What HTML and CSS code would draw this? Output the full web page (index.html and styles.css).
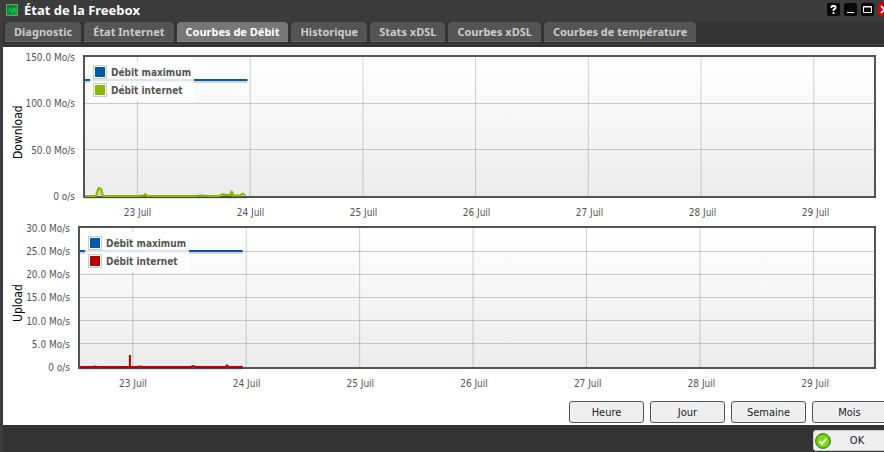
FILE: index.html
```
<!DOCTYPE html>
<html lang="fr">
<head>
<meta charset="utf-8">
<title>État de la Freebox</title>
<link rel="stylesheet" href="styles.css">
</head>
<body>
<div class="window">
  <header class="titlebar">
    <svg class="app-icon" viewBox="0 0 12 12" aria-hidden="true">
      <defs><linearGradient id="app" x1="0" y1="0" x2="1" y2="1"><stop offset="0" stop-color="#077428"/><stop offset="1" stop-color="#10a845"/></linearGradient></defs>
      <rect x=".5" y=".5" width="11" height="11" fill="url(#app)" stroke="#6c9a78"/>
      <path d="M2 7h1l1.500-3 1.500 5 2-5 .5 4 1.500-4" fill="none" stroke="#12d052" stroke-width=".8"/>
    </svg>
    <h1>État de la Freebox</h1>
    <div class="tools">
      <button class="tool" type="button" aria-label="Aide"><svg viewBox="0 0 13 13"><path d="M4.500 5V4q0-1 1-1h2q1 0 1 1v1.200L6.500 7v1M6.500 9v2" fill="none" stroke="#fff" stroke-width="1.8"/></svg></button>
      <button class="tool" type="button" aria-label="Réduire"><svg viewBox="0 0 13 13"><path d="M3 9.500h7" stroke="#fff"/></svg></button>
      <button class="tool" type="button" aria-label="Agrandir"><svg viewBox="0 0 13 13"><path d="M2.500 3.500h8v6h-8zM2 4h9" fill="none" stroke="#fff"/></svg></button>
      <button class="tool tool-close" type="button" aria-label="Fermer"><svg viewBox="0 0 13 13"><path d="M3 3l7 7M10 3l-7 7" stroke="#fff" stroke-width="1.8"/></svg></button>
    </div>
  </header>
  <nav class="tabs">
    <a href="#diagnostic">Diagnostic</a>
    <a href="#internet">État Internet</a>
    <a href="#debit" class="active">Courbes de Débit</a>
    <a href="#historique">Historique</a>
    <a href="#stats">Stats xDSL</a>
    <a href="#xdsl">Courbes xDSL</a>
    <a href="#temperature">Courbes de température</a>
  </nav>
  <main class="panel">
    <section class="chart">
      <div class="axis-title">Download</div>
      <div class="y-axis"><span>150.0 Mo/s</span><span>100.0 Mo/s</span><span>50.0 Mo/s</span><span>0 o/s</span></div>
      <div class="plot">
        <svg class="grid" aria-hidden="true">
          <g class="lines">
            <line x1="0" x2="100%" y1="46.5" y2="46.5"/><line x1="0" x2="100%" y1="92.5" y2="92.5"/>
            <line x1="6.65%" x2="6.65%" y1="0" y2="139"/><line x1="20.94%" x2="20.94%" y1="0" y2="139"/><line x1="35.22%" x2="35.22%" y1="0" y2="139"/><line x1="49.51%" x2="49.51%" y1="0" y2="139"/><line x1="63.79%" x2="63.79%" y1="0" y2="139"/><line x1="78.08%" x2="78.08%" y1="0" y2="139"/><line x1="92.37%" x2="92.37%" y1="0" y2="139"/>
          </g>
          <svg width="20.6%" height="143" viewBox="0 0 162 143" preserveAspectRatio="none" overflow="visible">
            <path d="M0 25h162" stroke="#000" stroke-opacity=".15" stroke-width="2"/>
            <path d="M0 23h162" stroke="#005aaa" stroke-width="2"/>
            <path d="M0 141h162" stroke="#000" stroke-opacity=".12" stroke-width="2"/>
            <path d="M12 138l1-6 1-1 2 1 2 7z" fill="#8ab800" fill-opacity=".4"/>
            <path d="M0 139h11l2-7 1-1 2 1 2 7h35l4-.5h2l1-1.500 2 2h48l6-.5 8 .5h10l3-2 3 1 5-.5 1-3 1 4h8l2-2 3 2" fill="none" stroke="#8ab800" stroke-width="2" stroke-linejoin="round"/>
            <path d="M137 138h9l1-2 1 2" fill="none" stroke="#8ab800" stroke-width="2"/>
          </svg>
        </svg>
        <ul class="legend"><li><i class="swatch blue"></i>Débit maximum</li><li><i class="swatch green"></i>Débit internet</li></ul>
      </div>
      <div class="x-axis"><span>23 Juil</span><span>24 Juil</span><span>25 Juil</span><span>26 Juil</span><span>27 Juil</span><span>28 Juil</span><span>29 Juil</span></div>
    </section>
    <section class="chart chart-upload">
      <div class="axis-title">Upload</div>
      <div class="y-axis"><span>30.0 Mo/s</span><span>25.0 Mo/s</span><span>20.0 Mo/s</span><span>15.0 Mo/s</span><span>10.0 Mo/s</span><span>5.0 Mo/s</span><span>0 o/s</span></div>
      <div class="plot">
        <svg class="grid" aria-hidden="true">
          <g class="lines">
            <line x1="0" x2="100%" y1="23.5" y2="23.5"/><line x1="0" x2="100%" y1="46.5" y2="46.5"/><line x1="0" x2="100%" y1="69.5" y2="69.5"/><line x1="0" x2="100%" y1="92.5" y2="92.5"/><line x1="0" x2="100%" y1="115.5" y2="115.5"/>
            <line x1="6.65%" x2="6.65%" y1="0" y2="139"/><line x1="20.94%" x2="20.94%" y1="0" y2="139"/><line x1="35.22%" x2="35.22%" y1="0" y2="139"/><line x1="49.51%" x2="49.51%" y1="0" y2="139"/><line x1="63.79%" x2="63.79%" y1="0" y2="139"/><line x1="78.08%" x2="78.08%" y1="0" y2="139"/><line x1="92.37%" x2="92.37%" y1="0" y2="139"/>
          </g>
          <svg width="20.5%" height="143" viewBox="0 0 163 143" preserveAspectRatio="none" overflow="visible">
            <path d="M0 25h163" stroke="#000" stroke-opacity=".15" stroke-width="2"/>
            <path d="M0 23h163" stroke="#005aaa" stroke-width="2"/>
            <path d="M0 141h163" stroke="#000" stroke-opacity=".12" stroke-width="2"/>
            <path d="M0 139h13l2-.5 2 .5h33v-12 12h8l2-.5 3 .5h48l2-1 3 1h30l1-1.500 2 1.500h14" fill="none" stroke="#b80000" stroke-width="2"/>
          </svg>
        </svg>
        <ul class="legend"><li><i class="swatch blue"></i>Débit maximum</li><li><i class="swatch red"></i>Débit internet</li></ul>
      </div>
      <div class="x-axis"><span>23 Juil</span><span>24 Juil</span><span>25 Juil</span><span>26 Juil</span><span>27 Juil</span><span>28 Juil</span><span>29 Juil</span></div>
    </section>
    <div class="periods">
      <button type="button">Heure</button>
      <button type="button">Jour</button>
      <button type="button">Semaine</button>
      <button type="button">Mois</button>
    </div>
  </main>
  <footer class="footer">
    <button class="ok" type="button">
      <svg viewBox="0 0 16 16" aria-hidden="true"><circle cx="8" cy="8" r="7.500" fill="#58b51c" stroke="#3f8f1d"/><circle cx="8" cy="8" r="6" fill="#7ddd0c"/><path d="M4.500 8.200l2.500 2.500 4.500-5" fill="none" stroke="#fff" stroke-width="2"/></svg>
      <span>OK</span>
    </button>
  </footer>
</div>
</body>
</html>
```
FILE: styles.css
```
* { box-sizing: border-box; }
body {
  margin: 0;
  overflow: hidden;
  background: #333;
  font-family: "DejaVu Sans Condensed", "Noto Sans", sans-serif;
  font-size: 10px;
  color: #545454;
}
button { font: inherit; padding: 0; }
.window { border-left: 3px solid #3c3c3c; }

.titlebar {
  display: flex;
  align-items: center;
  height: 22px;
  padding: 0 0 3px 3px;
  background: #3b3b3b;
}
.app-icon { width: 12px; height: 12px; }
.titlebar h1 {
  margin: 0 auto 0 6px;
  font: bold 13px/18px "Noto Sans", sans-serif;
  color: #fff;
}
.tools { display: flex; gap: 4px; margin-right: -7px; }
.tool {
  width: 13px;
  height: 13px;
  border: 0;
  border-radius: 2px;
  background: #080808;
}
.tool svg { display: block; width: 13px; height: 13px; }
.tool-close { background: #d90000; }

.tabs {
  display: flex;
  gap: 3px;
  height: 25px;
  padding: 0 2px 5px;
  background: linear-gradient(#333 22px, #3d3d3d 22px, #3d3d3d 23px, #333 23px);
}
.tabs a {
  padding: 0 9px;
  border-bottom: 1px solid #666;
  border-radius: 4px 4px 0 0;
  background: #545454;
  color: #ccc;
  font: bold 11px/20px "Noto Sans", sans-serif;
  text-decoration: none;
  white-space: nowrap;
}
.tabs .active { background: #777; border-color: #888; color: #fff; }

.panel { padding: 8px 8px 2px; background: #fff; }
.chart {
  display: grid;
  grid-template-columns: 14px 42px minmax(0, 1fr);
  grid-template-rows: 143px 28px;
  column-gap: 8px;
}
.chart-upload { grid-template-columns: 14px 37px minmax(0, 1fr); }
.axis-title {
  grid-row: 1 / 3;
  padding-top: 16px;
  writing-mode: vertical-rl;
  transform: rotate(180deg);
  font-size: 12px;
  line-height: 14px;
  text-align: center;
  color: #000;
}
.y-axis {
  display: flex;
  flex-direction: column;
  justify-content: space-between;
  margin: -4px 0 -6px -8px;
  line-height: 14px;
  text-align: right;
  white-space: nowrap;
}
.plot {
  position: relative;
  border: 2px solid #545454;
  background: linear-gradient(#fff, #ececec);
}
.grid {
  display: block;
  width: 100%;
  height: 139px;
  overflow: visible;
}
.lines { stroke: #000; stroke-opacity: .18; }
.legend {
  position: absolute;
  top: 4px;
  left: 5px;
  margin: 0;
  padding: 2px 3px;
  list-style: none;
  background: rgba(255, 255, 255, .85);
  font-weight: bold;
}
.legend li { display: flex; align-items: center; gap: 4px; height: 18px; white-space: nowrap; }
.swatch { width: 14px; height: 14px; padding: 1px; border: 1px solid #ccc; background-clip: content-box; }
.blue { background-color: #005aaa; }
.green { background-color: #8ab800; }
.red { background-color: #b80000; }
.x-axis {
  grid-column: 3;
  display: grid;
  grid-template-columns: repeat(7, 1fr);
  margin: 0 4px 0 -2px;
  line-height: 30px;
  text-align: center;
}
.periods {
  display: flex;
  justify-content: flex-end;
  gap: 6px;
  margin-right: -11px;
  padding-top: 4px;
}
.periods button {
  width: 75px;
  height: 22px;
  border: 1px solid #545454;
  border-radius: 3px;
  background: #efefef;
  color: #222;
  font-size: 11px;
}
.footer { display: flex; justify-content: flex-end; margin-right: -4px; padding: 5px 0 1px; }
.ok {
  display: flex;
  align-items: center;
  width: 75px;
  height: 21px;
  padding: 0 4px 0 1px;
  border: 1px solid #ccc;
  border-radius: 3px;
  background: #efefef;
  color: #222;
  font-size: 11px;
}
.ok svg { width: 16px; height: 16px; }
.ok span { flex: 1; text-align: center; }
```
